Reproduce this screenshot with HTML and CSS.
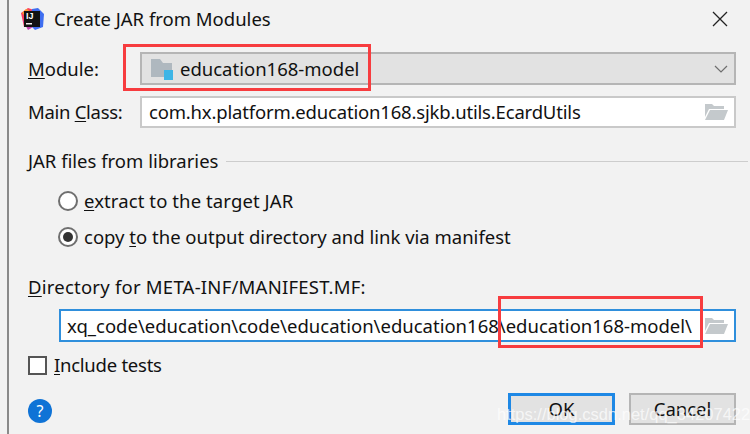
FILE: index.html
```html
<!DOCTYPE html>
<html lang="en">
<head>
    <meta charset="UTF-8">
    <title>Create JAR from Modules</title>
    <link rel="stylesheet" href="styles.css">
</head>
<body>
    <div class="dialog">
        <div class="title-bar">
            <svg class="app-icon" width="24" height="24" viewBox="0 0 24 24">
                <path d="M1 6 L8 1 L14 3 L10 14 L4 20 Z" fill="#fb3d5f"/>
                <path d="M3 14 L8 23 L13 20 L7 12 Z" fill="#c23fb0"/>
                <path d="M12 2 L18 1 L24 7 L23 20 L15 23 L10 18 Z" fill="#3f6ef0"/>
                <path d="M2 6 L6 2 L9 3 L5 9 Z" fill="#fd9a2e"/>
                <rect x="4" y="4" width="16" height="16" fill="#111"/>
                <text class="app-icon-text" x="6" y="12">IJ</text>
                <rect x="6" y="16" width="6" height="1.5" fill="#eee"/>
            </svg>
            <span class="title">Create JAR from Modules</span>
            <svg class="close" width="16" height="16" viewBox="0 0 16 16">
                <path d="M1 1 L15 15 M15 1 L1 15" stroke="#222" stroke-width="1.3" fill="none"/>
            </svg>
        </div>

        <div class="row row-module">
            <label class="row-label"><u>M</u>odule:</label>
            <div class="combo">
                <svg width="24" height="24" viewBox="0 0 24 24">
                    <path d="M1 2 H10 L13 6 H22 V20 H1 Z" fill="#afb8bf"/>
                    <rect x="14" y="13" width="9" height="10" fill="#3db5e6"/>
                </svg>
                <span class="combo-text">education168-model</span>
                <svg class="chevron" width="14" height="8" viewBox="0 0 14 8">
                    <path d="M1 1 L7 7 L13 1" stroke="#6e6e6e" stroke-width="1.2" fill="none"/>
                </svg>
            </div>
        </div>

        <div class="row row-main">
            <label class="row-label main-label">Main <u>C</u>lass:</label>
            <div class="field">
                <span class="field-text main-class">com.hx.platform.education168.sjkb.utils.EcardUtils</span>
                <svg class="folder" width="24" height="18" viewBox="0 0 24 18">
                    <path d="M1 1 H8 L10 3 H20 V6 H5 L1 14 Z" fill="#c4c9cc"/>
                    <path d="M6 7 H24 L20 17 H1 Z" fill="#c4c9cc"/>
                </svg>
            </div>
        </div>

        <div class="section-title">
            <span>JAR files from libraries</span>
            <div class="section-line"></div>
        </div>

        <div class="radio-row radio-first">
            <span class="radio"></span>
            <span class="radio-text-wide"><u>e</u>xtract to the target JAR</span>
        </div>
        <div class="radio-row">
            <span class="radio radio-on"></span>
            <span>copy <u>t</u>o the output directory and link via manifest</span>
        </div>

        <div class="dir-label"><u>D</u>irectory for META-INF/MANIFEST.MF:</div>
        <div class="field field-focus">
            <span class="field-text">xq_code\education\code\education\education168\education168-model\</span>
            <svg class="folder" width="24" height="18" viewBox="0 0 24 18">
                <path d="M1 1 H8 L10 3 H20 V6 H5 L1 14 Z" fill="#c4c9cc"/>
                <path d="M6 7 H24 L20 17 H1 Z" fill="#c4c9cc"/>
            </svg>
        </div>

        <div class="check-row">
            <span class="checkbox"></span>
            <span class="check-text"><u>I</u>nclude tests</span>
        </div>

        <div class="footer">
            <span class="help">?</span>
            <div class="buttons">
                <div class="btn btn-default">OK</div>
                <div class="btn">Cancel</div>
            </div>
        </div>
    </div>

    <div class="mark mark-module"></div>
    <div class="mark mark-dir"></div>
    <div class="watermark">https://blog.csdn.net/qq_34207422</div>
</body>
</html>
```

FILE: styles.css
```css
body {
    margin: 0;
    width: 750px;
    height: 434px;
    overflow: hidden;
    position: relative;
    background: #f2f2f2;
    font-family: "Noto Sans", sans-serif;
    font-size: 18.5px;
    line-height: 24px;
    color: #111;
}
u {
    text-underline-offset: 2px;
}
.dialog {
    margin-left: 7px;
    height: 434px;
    box-sizing: border-box;
    border-left: 2px solid #8a8a8a;
    padding: 0 14px 0 19px;
}
.title-bar {
    display: flex;
    align-items: center;
    height: 38px;
    margin-left: -8px;
    margin-right: 8px;
}
.app-icon {
    margin-right: 10px;
}
.app-icon-text {
    font-family: "Liberation Sans", sans-serif;
    font-size: 9px;
    font-weight: bold;
    fill: #fff;
}
.close {
    margin-left: auto;
}
.row {
    display: flex;
    align-items: center;
}
.row-module {
    margin-top: 14px;
}
.row-main {
    margin-top: 11px;
}
.row-label {
    width: 112px;
}
.main-label {
    letter-spacing: -0.3px;
}
.combo {
    flex: 1;
    height: 33px;
    box-sizing: border-box;
    border: 2px solid #b5b5b5;
    background: #e2e2e2;
    display: flex;
    align-items: center;
    padding: 0 6px 0 8px;
}
.combo-text {
    margin-left: 6px;
}
.chevron {
    margin-left: auto;
}
.field {
    flex: 1;
    height: 32px;
    box-sizing: border-box;
    border: 2px solid #c9c9c9;
    background: #fff;
    display: flex;
    align-items: center;
    padding: 0 6px 0 7px;
}
.field-text {
    white-space: nowrap;
}
.main-class {
    letter-spacing: -0.18px;
}
.folder {
    margin-left: auto;
    flex-shrink: 0;
}
.section-title {
    display: flex;
    align-items: center;
    margin-top: 21px;
    gap: 8px;
}
.section-line {
    flex: 1;
    height: 1px;
    background: #cdcdcd;
    margin-right: -12px;
}
.radio-row {
    display: flex;
    align-items: center;
    gap: 6px;
    height: 24px;
    margin-top: 12px;
    margin-left: 30px;
}
.radio-first {
    margin-top: 16px;
}
.radio-text-wide {
    letter-spacing: 0.1px;
}
.radio {
    width: 16px;
    height: 16px;
    border: 2px solid #6f6f6f;
    border-radius: 50%;
    background: #fff;
    position: relative;
}
.radio-on::after {
    content: "";
    position: absolute;
    left: 3px;
    top: 3px;
    width: 10px;
    height: 10px;
    border-radius: 50%;
    background: #333;
}
.dir-label {
    margin-top: 26px;
    letter-spacing: 0.23px;
}
.field-focus {
    margin-top: 10px;
    margin-left: 31px;
    height: 33px;
    border-color: #2f8fdc;
    padding-left: 6px;
}
.check-row {
    display: flex;
    align-items: center;
    gap: 7px;
    margin-top: 11px;
}
.check-text {
    letter-spacing: -0.25px;
}
.checkbox {
    width: 15px;
    height: 15px;
    border: 2px solid #555;
    background: #fff;
}
.footer {
    display: flex;
    align-items: flex-start;
    justify-content: space-between;
    margin-top: 16px;
}
.help {
    width: 24px;
    height: 24px;
    margin-top: 6px;
    border-radius: 50%;
    background: #0f73d6;
    color: #fff;
    font-size: 16px;
    text-align: center;
    line-height: 24px;
}
.buttons {
    display: flex;
    gap: 14px;
}
.btn {
    width: 107px;
    height: 32px;
    box-sizing: border-box;
    border: 2px solid #b5b5b5;
    background: #e2e2e2;
    text-align: center;
    line-height: 28px;
}
.btn-default {
    border: 3px solid #1e88e5;
    line-height: 26px;
}
.mark {
    position: absolute;
    box-sizing: border-box;
    border: 3px solid #f73c3f;
}
.mark-module {
    left: 123px;
    top: 44px;
    width: 248px;
    height: 47px;
}
.mark-dir {
    left: 498px;
    top: 296px;
    width: 205px;
    height: 52px;
}
.watermark {
    position: absolute;
    left: 497px;
    top: 402px;
    font-family: "Liberation Sans", sans-serif;
    font-size: 16.5px;
    color: rgba(255, 255, 255, 0.7);
    white-space: nowrap;
}
```
